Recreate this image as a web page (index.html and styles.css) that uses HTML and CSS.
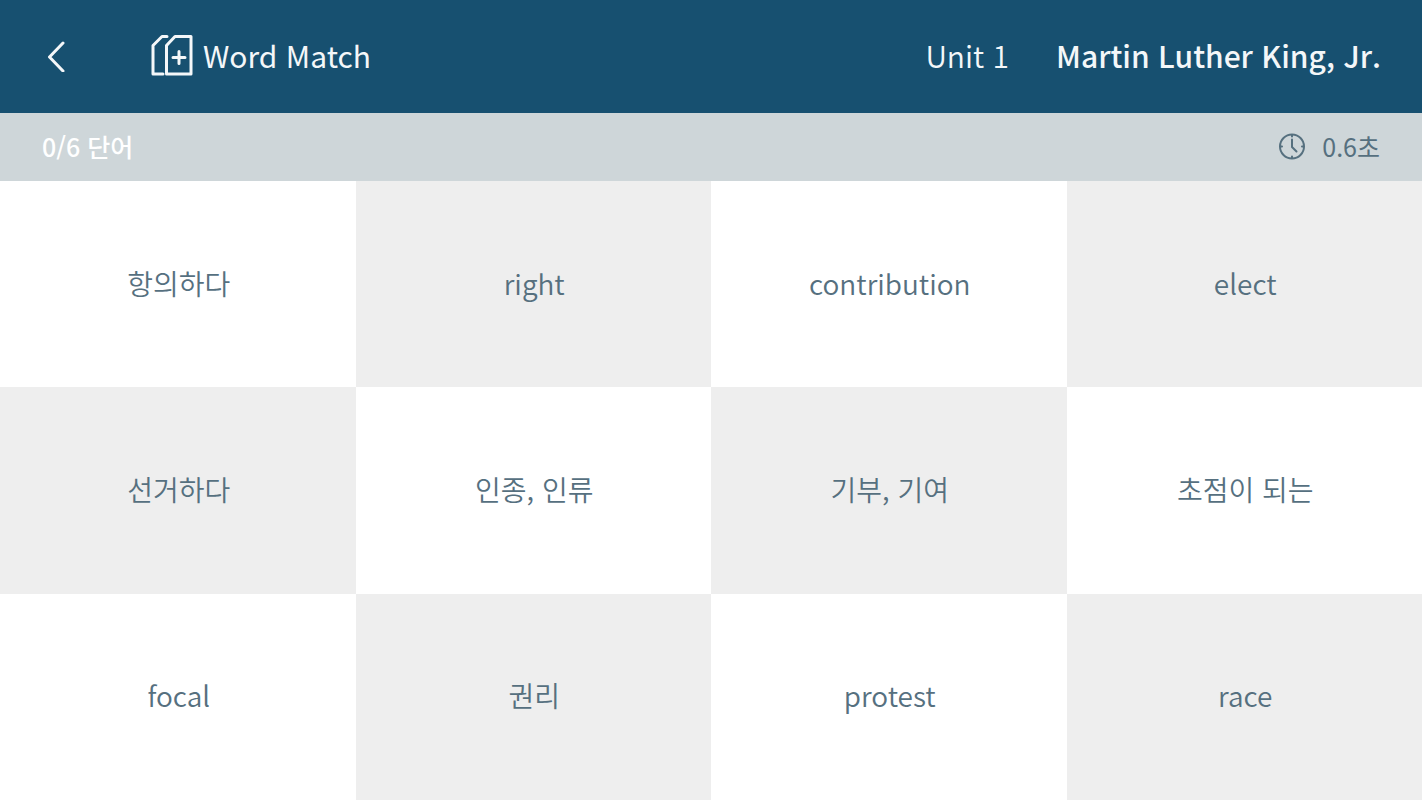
FILE: index.html
```html
<!DOCTYPE html>
<html lang="ko">
  <head>
    <meta charset="UTF-8" />
    <meta name="viewport" content="width=device-width, initial-scale=1.0" />
    <title>Word Match</title>
    <link rel="stylesheet" href="styles.css">
  </head>
  <body>
    <header class="header">
      <button type="button" class="back-button" aria-label="Back">
        <svg width="20" height="34" viewBox="0 0 20 34">
          <path d="M17 5 L3.5 19 L17 33" />
        </svg>
      </button>
      <h1 class="title">
        <svg class="title-icon" width="42" height="42" viewBox="0 0 42 42">
          <path d="M16 2.5 H11 L2 11.5 V40 H12" />
          <path d="M24 2.5 H40 V40 H15.5 V11.5 Z" />
          <path d="M28 17.5 V29.5 M22 23.5 H34" />
        </svg>
        Word Match
      </h1>
      <p class="unit">Unit 1</p>
      <p class="lesson">Martin Luther King, Jr.</p>
    </header>

    <div class="status">
      <p class="count">0/6 단어</p>
      <p class="timer">
        <svg class="clock" width="28" height="28" viewBox="0 0 28 28">
          <circle cx="14" cy="14.5" r="12" />
          <path d="M14 7.5 V15 L18.5 19.5" />
          <path d="M14 3 V4.5 M14 24.5 V26 M2.5 14.5 H4 M24 14.5 H25.5" />
        </svg>
        0.6초
      </p>
    </div>

    <main class="board">
      <button type="button" class="card">항의하다</button>
      <button type="button" class="card gray">right</button>
      <button type="button" class="card">contribution</button>
      <button type="button" class="card gray">elect</button>
      <button type="button" class="card gray">선거하다</button>
      <button type="button" class="card">인종, 인류</button>
      <button type="button" class="card gray">기부, 기여</button>
      <button type="button" class="card">초점이 되는</button>
      <button type="button" class="card">focal</button>
      <button type="button" class="card gray">권리</button>
      <button type="button" class="card">protest</button>
      <button type="button" class="card gray">race</button>
    </main>
  </body>
</html>
```
FILE: styles.css
```css
* {
  box-sizing: border-box;
}

body {
  display: flex;
  flex-direction: column;
  min-height: 100vh;
  margin: 0;
  font-family: "Noto Sans CJK KR", sans-serif;
}

h1,
p {
  margin: 0;
}

button {
  border: 0;
  font-family: inherit;
  cursor: pointer;
}

svg {
  fill: none;
  stroke: currentColor;
  stroke-linecap: round;
  stroke-linejoin: round;
}

.header {
  display: flex;
  align-items: center;
  padding: 31px 41px 34px;
  background: #175070;
  color: #f4f7f9;
  font-size: 30px;
  line-height: 48px;
}

.back-button {
  display: flex;
  padding: 5px;
  background: none;
  color: inherit;
  stroke-width: 3;
}

.title {
  display: flex;
  align-items: center;
  gap: 10px;
  margin-left: 80px;
  font-size: inherit;
  font-weight: 400;
}

.title-icon {
  stroke-width: 3;
}

.unit {
  margin-left: auto;
  font-weight: 350;
}

.lesson {
  margin-left: 47px;
  font-weight: 500;
}

.status {
  display: flex;
  align-items: center;
  justify-content: space-between;
  padding: 13px 42px 15px;
  background: #ced6d9;
  font-size: 25px;
  line-height: 40px;
}

.count {
  color: #fff;
  font-weight: 500;
}

.timer {
  display: flex;
  align-items: center;
  gap: 16px;
  color: #56707f;
}

.clock {
  stroke-width: 2;
}

.board {
  display: grid;
  flex: 1;
  grid-template-columns: repeat(4, 1fr);
  grid-auto-rows: 1fr;
}

.card {
  padding: 0 14px 3px 16px;
  background: #fff;
  color: #56707f;
  font-size: 28px;
  font-weight: 350;
  line-height: 40px;
}

.gray {
  background: #eee;
}
```
